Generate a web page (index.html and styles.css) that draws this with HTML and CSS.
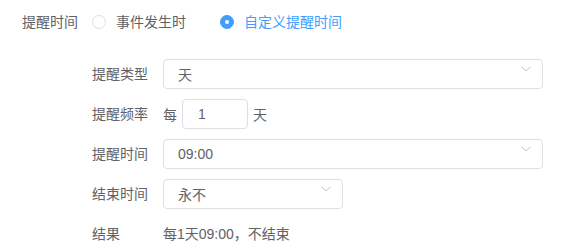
FILE: index.html
```html
<!DOCTYPE html>
<html lang="zh-CN">
<head>
<meta charset="utf-8">
<title>提醒设置</title>
<link rel="stylesheet" href="styles.css">
</head>
<body>
<div class="page">
  <div class="top-row">
    <span class="top-label">提醒时间</span>
    <label class="radio">
      <span class="radio-dot"></span>
      <span class="radio-text">事件发生时</span>
    </label>
    <label class="radio checked">
      <span class="radio-dot"></span>
      <span class="radio-text">自定义提醒时间</span>
    </label>
  </div>

  <div class="form">
    <div class="label">提醒类型</div>
    <div class="field">
      <div class="select wide">
        <span class="value">天</span>
        <svg class="arrow" width="10" height="6" viewBox="0 0 10 6"><path d="M0.5 0.8 L5 5 L9.5 0.8" fill="none" stroke="#c0c4cc" stroke-width="1"/></svg>
      </div>
    </div>

    <div class="label">提醒频率</div>
    <div class="field">
      <span class="affix">每</span>
      <div class="input num"><span class="value">1</span></div>
      <span class="affix">天</span>
    </div>

    <div class="label">提醒时间</div>
    <div class="field">
      <div class="select wide">
        <span class="value">09:00</span>
        <svg class="arrow" width="10" height="6" viewBox="0 0 10 6"><path d="M0.5 0.8 L5 5 L9.5 0.8" fill="none" stroke="#c0c4cc" stroke-width="1"/></svg>
      </div>
    </div>

    <div class="label">结束时间</div>
    <div class="field">
      <div class="select narrow">
        <span class="value">永不</span>
        <svg class="arrow" width="10" height="6" viewBox="0 0 10 6"><path d="M0.5 0.8 L5 5 L9.5 0.8" fill="none" stroke="#c0c4cc" stroke-width="1"/></svg>
      </div>
    </div>

    <div class="label">结果</div>
    <div class="field result">每1天09:00，不结束</div>
  </div>
</div>
</body>
</html>
```

FILE: styles.css
```css
html, body {
  margin: 0;
  padding: 0;
  background: #ffffff;
}
body {
  font-family: "Liberation Sans", "Noto Sans CJK SC", sans-serif;
  font-size: 14px;
  color: #606266;
}
.page {
  padding: 7px 0 0 22px;
}
.top-row {
  display: flex;
  align-items: center;
  height: 30px;
}
.top-label {
  margin-right: 14px;
  line-height: 30px;
}
.radio {
  display: flex;
  align-items: center;
  margin-right: 34px;
  line-height: 30px;
}
.radio-dot {
  box-sizing: border-box;
  width: 14px;
  height: 14px;
  border: 1px solid #dcdfe6;
  border-radius: 50%;
  background: #fff;
  margin-right: 10px;
  position: relative;
}
.radio.checked .radio-dot {
  border-color: #409eff;
  background: #409eff;
}
.radio.checked .radio-dot::after {
  content: "";
  position: absolute;
  left: 50%;
  top: 50%;
  width: 4px;
  height: 4px;
  margin: -2px 0 0 -2px;
  border-radius: 50%;
  background: #fff;
}
.radio.checked .radio-text {
  color: #409eff;
}
.form {
  margin: 22px 0 0 70px;
  display: grid;
  grid-template-columns: 71px auto;
  grid-auto-rows: 30px;
  row-gap: 10px;
}
.label {
  line-height: 30px;
  white-space: nowrap;
}
.field {
  display: flex;
  align-items: center;
}
.select, .input {
  box-sizing: border-box;
  height: 30px;
  border: 1px solid #dcdfe6;
  border-radius: 4px;
  background: #fff;
  position: relative;
  display: flex;
  align-items: center;
  padding: 0 14px;
  color: #606266;
}
.wide { width: 380px; }
.narrow { width: 180px; }
.num {
  width: 66px;
  padding-left: 15px;
}
.affix {
  margin-right: 5px;
}
.num + .affix {
  margin: 0 0 0 5px;
}
.arrow {
  position: absolute;
  right: 11px;
  top: 6px;
}
.result {
  line-height: 30px;
}
```
